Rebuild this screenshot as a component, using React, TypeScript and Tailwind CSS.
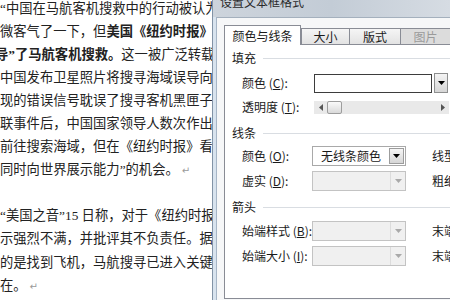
import React from "react";

const Tri = ({ color = "#000" }: { color?: string }) => (
  <svg width="7" height="4" viewBox="0 0 7 4">
    <path d="M0 0h7L3.5 4z" fill={color} />
  </svg>
);

const Section = ({ title, mt }: { title: string; mt: string }) => (
  <div className={`flex items-center h-[16px] ${mt}`}>
    <span className="leading-[16px]">{title}</span>
    <div className="flex-1 ml-[7px] h-px bg-[#d9dde2]" />
  </div>
);

const Label = ({ text, k }: { text: string; k: string }) => (
  <span className="w-[70px] shrink-0 whitespace-nowrap leading-[16px]">
    {text} (<span className="underline">{k}</span>):
  </span>
);

const Combo = ({ value }: { value: string }) => (
  <div className="w-[94px] h-[20px] shrink-0 border border-[#a9a9a9] bg-white flex items-center">
    <span className="flex-1 pl-[8px] leading-[16px] whitespace-nowrap">{value}</span>
    <div className="w-[15px] h-[16px] mr-[1px] border border-[#9c9c9c] bg-gradient-to-b from-[#f6f6f6] to-[#d6d6d6] flex items-center justify-center">
      <Tri />
    </div>
  </div>
);

const DisabledCombo = () => (
  <div className="w-[94px] h-[20px] shrink-0 border border-[#c3c3c3] bg-[#f0f0f0] flex items-center">
    <div className="flex-1" />
    <div className="w-[15px] h-[18px] border-l border-[#dcdcdc] flex items-center justify-center">
      <Tri color="#a9a9a9" />
    </div>
  </div>
);

const Line = ({ children, className = "" }: { children?: React.ReactNode; className?: string }) => (
  <div className={`h-[23.1px] leading-[23.1px] whitespace-nowrap ${className}`}>{children}</div>
);

const Mark = () => (
  <span className="text-[10px] text-[#9a9a9a] ml-[3px] font-['DejaVu_Sans',sans-serif]">↵</span>
);

export default function App() {
  return (
    <div className="w-[450px] h-[300px] overflow-hidden bg-white flex">
      {/* document */}
      <div className="w-[212px] shrink-0 overflow-hidden text-[13.3px] text-[#222] font-['Liberation_Serif','Noto_Sans_CJK_SC',serif]">
        <div className="-mt-[3.5px]">
          <Line>“中国在马航客机搜救中的行动被认为</Line>
          <Line>
            微客气了一下，但<b>美国《纽约时报》</b>
          </Line>
          <Line className="-ml-[5px]">
            <b>导”了马航客机搜救。</b>这一被广泛转载
          </Line>
          <Line>中国发布卫星照片将搜寻海域误导向</Line>
          <Line>现的错误信号耽误了搜寻客机黑匣子</Line>
          <Line>联事件后，中国国家领导人数次作出</Line>
          <Line>前往搜索海域，但在《纽约时报》看来</Line>
          <Line>
            同时向世界展示能力”的机会。
            <Mark />
          </Line>
          <Line />
          <Line>“美国之音”15 日称，对于《纽约时报》</Line>
          <Line>示强烈不满，并批评其不负责任。据</Line>
          <Line>的是找到飞机，马航搜寻已进入关键</Line>
          <Line>
            在。
            <Mark />
          </Line>
        </div>
      </div>

      {/* dialog */}
      <div className="w-[238px] h-[300px] shrink-0 overflow-hidden border-l border-[#8293a6] bg-gradient-to-r from-[#cdd4dc] via-[#c3ccd6] to-[#d6dce3] flex flex-col text-[12px] text-[#1a1a1a] font-['Noto_Sans_CJK_SC',sans-serif]">
        <div className="h-[17px] shrink-0 pl-[7px] overflow-hidden">
          <div className="-mt-[4px] leading-[12px] text-[#2a2a2a] whitespace-nowrap">设置文本框格式</div>
        </div>
        <div className="flex flex-1">
          <div className="w-[4px] shrink-0 bg-[#d8e3ee] border-r border-[#a6b5c6]" />
          <div className="flex-1 bg-[#f6f7f8] border-t border-[#a4b0bd] pl-[7px] pt-[7px] overflow-hidden">
            <div className="flex items-end h-[19px] w-[240px] whitespace-nowrap">
              <div className="relative z-10 w-[77px] h-[20px] -mb-px bg-white border border-b-0 border-[#898c95] flex items-center justify-center">
                颜色与线条
              </div>
              <div className="w-[49px] h-[16px] border border-b-0 border-[#898c95] bg-gradient-to-b from-[#f5f5f5] to-[#e3e3e3] flex items-center justify-center">
                大小
              </div>
              <div className="w-[51px] h-[16px] border border-b-0 border-l-0 border-[#898c95] bg-gradient-to-b from-[#f5f5f5] to-[#e3e3e3] flex items-center justify-center">
                版式
              </div>
              <div className="w-[50px] h-[16px] border border-b-0 border-l-0 border-[#898c95] bg-[#dcdcdc] text-[#9a9a9a] flex items-center justify-center">
                图片
              </div>
            </div>
            <div className="w-[240px] h-[255px] border border-[#898c95] bg-white pl-[7px] pt-[5px]">
              <Section title="填充" mt="" />
              <div className="flex items-center h-[20px] mt-[7px] pl-[10px]">
                <Label text="颜色" k="C" />
                <div className="ml-[2px] w-[118px] h-[19px] shrink-0 border border-[#3d3d3d] bg-white" />
                <div className="ml-[2px] w-[14px] h-[20px] shrink-0 border border-[#8e8f8f] bg-gradient-to-b from-[#f4f4f4] to-[#d6d6d6] flex items-center justify-center">
                  <Tri />
                </div>
              </div>
              <div className="flex items-center h-[14px] mt-[7px] pl-[10px]">
                <Label text="透明度" k="T" />
                <div className="ml-[2px] w-[135px] h-[13px] shrink-0 bg-[#e9e9e9] flex items-center">
                  <svg width="4" height="7" viewBox="0 0 4 7" className="ml-[5px]">
                    <path d="M4 0v7L0 3.5z" fill="#555" />
                  </svg>
                  <div className="ml-[4px] w-[15px] h-[13px] rounded-[2px] border border-[#9d9d9d] bg-gradient-to-b from-[#fafafa] to-[#dadada]" />
                  <div className="flex-1" />
                  <svg width="4" height="7" viewBox="0 0 4 7" className="mr-[4px]">
                    <path d="M0 0v7L4 3.5z" fill="#555" />
                  </svg>
                </div>
              </div>
              <Section title="线条" mt="mt-[11px]" />
              <div className="flex items-center h-[20px] mt-[5px] pl-[10px] whitespace-nowrap">
                <Label text="颜色" k="O" />
                <Combo value="无线条颜色" />
                <span className="ml-[26px]">线型 (S):</span>
              </div>
              <div className="flex items-center h-[20px] mt-[5px] pl-[10px] whitespace-nowrap">
                <Label text="虚实" k="D" />
                <DisabledCombo />
                <span className="ml-[26px]">粗细 (W):</span>
              </div>
              <Section title="箭头" mt="mt-[8px]" />
              <div className="flex items-center h-[20px] mt-[6px] pl-[10px] whitespace-nowrap">
                <Label text="始端样式" k="B" />
                <DisabledCombo />
                <span className="ml-[26px]">末端样式 (E):</span>
              </div>
              <div className="flex items-center h-[20px] mt-[5px] pl-[10px] whitespace-nowrap">
                <Label text="始端大小" k="I" />
                <DisabledCombo />
                <span className="ml-[26px]">末端大小 (Z):</span>
              </div>
            </div>
          </div>
        </div>
      </div>
    </div>
  );
}
